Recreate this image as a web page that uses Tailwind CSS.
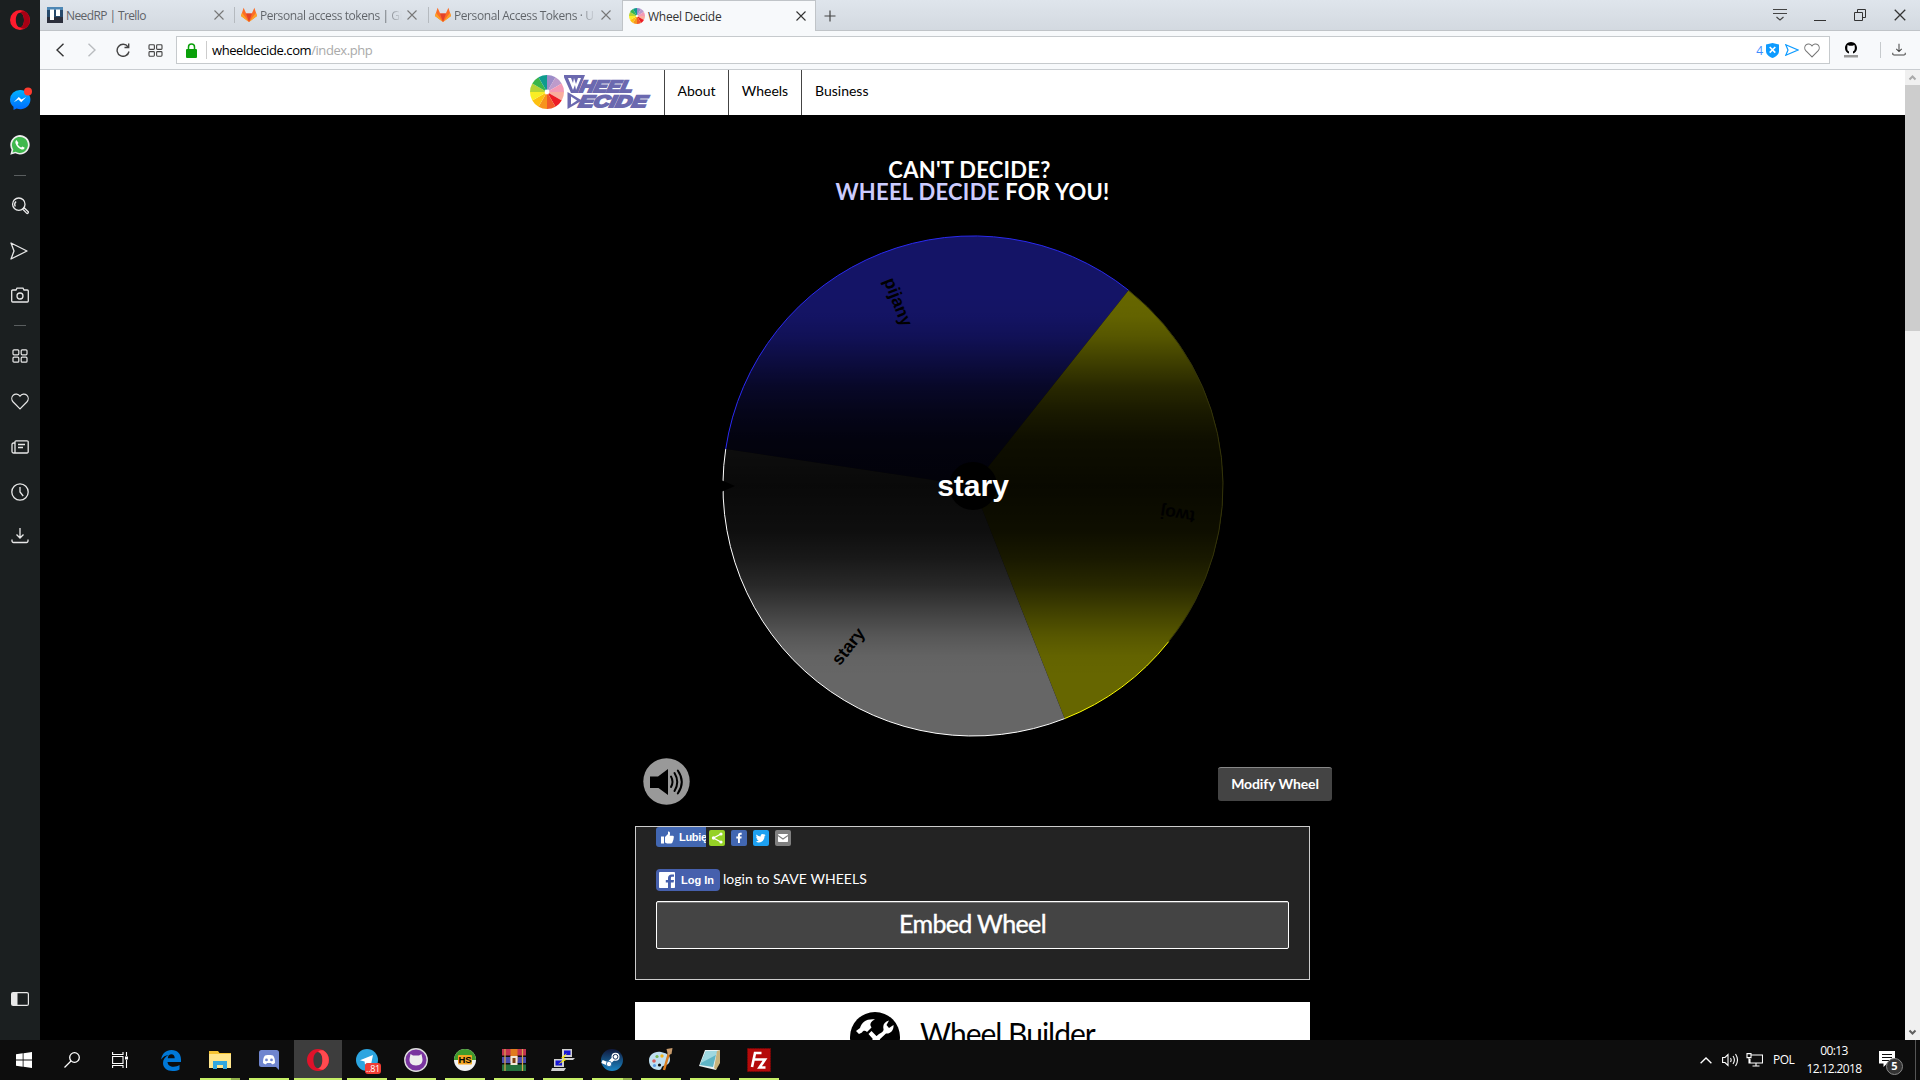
<!DOCTYPE html>
<html lang="pl">
<head>
<meta charset="utf-8">
<title>Wheel Decide</title>
<script src="https://cdn.jsdelivr.net/npm/@tailwindcss/browser@4"></script>
</head>
<body class="flex h-[1080px] w-[1920px] flex-col overflow-hidden bg-black font-['Open_Sans',sans-serif]">
<svg class="hidden">
  <defs>
    <symbol id="opera" viewBox="0 0 24 24"><path fill-rule="evenodd" fill="#ff1b2d" d="M12 0a12 12 0 1 0 0 24 12 12 0 0 0 0-24zm0 3.2c3 0 4.8 4 4.800 8.800s-1.800 8.800-4.800 8.800S7 16.800 7 12s2-8.800 5-8.800z"/><path fill="#a70014" d="M12 3.200C14 1.500 16 1.200 18 1.700A12 12 0 0 1 18 22.300c-2 .5-4 .2-6-1.500 3 0 4.800-4 4.800-8.800S15 3.200 12 3.200z"/></symbol>
    <symbol id="operaTask" viewBox="0 0 24 24"><path fill-rule="evenodd" fill="#e0122a" d="M12 0a12 12 0 1 0 0 24 12 12 0 0 0 0-24zm0 3.200c3 0 4.800 4 4.800 8.800s-1.800 8.800-4.800 8.800S7 16.800 7 12s2-8.800 5-8.800z"/><path fill="#ff4a4f" d="M12 3.200C14 1.500 16 1.200 18 1.700A12 12 0 0 1 18 22.300c-2 .5-4 .2-6-1.500 3 0 4.800-4 4.800-8.800S15 3.200 12 3.200z"/></symbol>
    <symbol id="gitlab" viewBox="0 0 16 16"><path fill="#fc6d26" d="M8 15 0 9 2.600.8 5.200 6.500h5.600L13.400.8 16 9z"/><path fill="#e24329" d="M8 15 5 6.500h6z"/><path fill="#fca326" d="M0 9l1-3.200L8 15zM16 9l-1-3.200L8 15z"/></symbol>
    <symbol id="wheel" viewBox="-50 -50 100 100">
      <g>
        <path fill="#9c8cc8" d="M0 0V-50A50 50 0 0 1 25-43.300z"/><path fill="#bd9bcb" d="M0 0 25-43.300A50 50 0 0 1 43.300-25z"/><path fill="#f49ab4" d="M0 0 43.300-25A50 50 0 0 1 50 0z"/><path fill="#f9ad9e" d="M0 0H50A50 50 0 0 1 43.300 25z"/><path fill="#ed1c24" d="M0 0 43.300 25A50 50 0 0 1 25 43.300z"/><path fill="#f15a29" d="M0 0 25 43.300A50 50 0 0 1 0 50z"/><path fill="#f7941d" d="M0 0V50A50 50 0 0 1-25 43.300z"/><path fill="#fdc010" d="M0 0-25 43.300A50 50 0 0 1-43.300 25z"/><path fill="#f9ed25" d="M0 0-43.300 25A50 50 0 0 1-50 0z"/><path fill="#b5d334" d="M0 0H-50A50 50 0 0 1-43.300-25z"/><path fill="#39b54a" d="M0 0-43.300-25A50 50 0 0 1-25-43.300z"/><path fill="#0f9b8e" d="M0 0-25-43.300A50 50 0 0 1 0-50z"/>
      </g><circle r="7" fill="#fff"/></symbol>
    <symbol id="x" viewBox="0 0 12 12"><path d="M1.500 1.500l9 9m0-9-9 9" stroke="currentColor" stroke-width="1.100" fill="none"/></symbol>
    <symbol id="grid" viewBox="0 0 16 14"><g fill="none" stroke="currentColor" stroke-width="1.200"><rect x="1" y=".8" width="5.800" height="5" rx="1"/><rect x="9.200" y=".8" width="5.800" height="5" rx="1"/><rect x="1" y="8.200" width="5.800" height="5" rx="1"/><rect x="9.200" y="8.200" width="5.800" height="5" rx="1"/></g></symbol>
    <symbol id="heart" viewBox="0 0 18 17"><path d="M9 15.800 2.200 9C.3 7 .4 4 2.200 2.200c2-1.800 5-1.400 6.800 1 1.800-2.400 4.800-2.800 6.800-1C17.600 4 17.700 7 15.800 9z" fill="none" stroke="currentColor" stroke-width="1.200"/></symbol>
    <symbol id="send" viewBox="0 0 18 18"><path d="M1 1l16 8L1 17l3-8z" fill="none" stroke="currentColor" stroke-width="1.300" stroke-linejoin="round"/></symbol>
    <symbol id="dl" viewBox="0 0 18 18"><path d="M9 1v10M5.500 7.500 9 11l3.500-3.500M1 12.500V14a1.500 1.500 0 0 0 1.500 1.500h13A1.500 1.500 0 0 0 17 14v-1.500" fill="none" stroke="currentColor" stroke-width="1.300"/></symbol>
  </defs>
</svg>

<div class="flex h-[1040px]">
  <!-- Opera sidebar -->
  <aside class="flex w-10 flex-col bg-[#1b1f20] text-[#e8e8e8]">
    <div class="flex h-10 items-center justify-center"><svg class="size-5"><use href="#opera"/></svg></div>
    <div class="mt-9 flex h-[46px] items-center justify-center">
      <svg class="h-6 w-6" viewBox="0 0 24 24"><defs><linearGradient id="ms" x1="0" y1="0" x2="0" y2="1"><stop stop-color="#00b2ff"/><stop offset="1" stop-color="#006aff"/></linearGradient></defs><path fill="url(#ms)" d="M12 3a10 9.600 0 0 0-10 9.600c0 3 1.200 5.400 3.500 7.200V23l3.200-1.500a10 9.600 0 1 0 3.300-18.500z"/><path d="M5.800 15.200l5-5.300 2.700 2.600 4.700-2.600-5 5.300-2.700-2.600z" fill="#fff"/><circle cx="20" cy="4.500" r="4" fill="#ff3b2f"/></svg>
    </div>
    <div class="flex h-[46px] items-center justify-center">
      <svg class="size-5" viewBox="0 0 20 20"><path d="M.3 19.700l1.300-5A9.700 9.700 0 1 1 5.300 18.300z" fill="#eee"/><path d="M2.500 17.500l.8-3.100a8 8 0 1 1 2.400 2.300z" fill="#3fb84d"/><path d="M6.500 5c-1 .7-1.400 2-.9 3.400 1 3 3.200 5 6 6 1.600.4 2.700-.2 3.100-1.700l-2.300-1.300-1.200 1.200c-1.600-.6-2.800-1.800-3.600-3.400L8.500 8z" fill="#fff"/></svg>
    </div>
    <div class="flex h-[15px] items-center justify-center"><div class="h-px w-3 bg-[#5a5e5f]"></div></div>
    <div class="flex h-[46px] items-center justify-center"><svg class="size-[18px]" viewBox="0 0 18 18" fill="none" stroke="currentColor" stroke-width="1.300"><circle cx="7.800" cy="7.200" r="6.200"/><path d="M4.300 9.500a4 4 0 0 1 .8-5"/><path d="M11.800 12.300l1.500-1.300 3.700 3.500a1 1 0 0 1-1.500 1.600z"/></svg></div>
    <div class="flex h-11 items-center justify-center pr-0.5"><svg class="size-[18px]"><use href="#send"/></svg></div>
    <div class="flex h-11 items-center justify-center pr-px"><svg class="h-4 w-[18px]" viewBox="0 0 18 16" fill="none" stroke="currentColor" stroke-width="1.300"><path d="M1.700 3H5l1-1.800h6L13 3h3.300a1 1 0 0 1 1 1v10a1 1 0 0 1-1 1H1.700a1 1 0 0 1-1-1V4a1 1 0 0 1 1-1z"/><circle cx="9" cy="9" r="3"/></svg></div>
    <div class="flex h-[17px] items-center justify-center"><div class="h-px w-3 bg-[#5a5e5f]"></div></div>
    <div class="flex h-11 items-center justify-center pr-px"><svg class="h-[14px] w-4"><use href="#grid"/></svg></div>
    <div class="flex h-[46px] items-center justify-center pr-px"><svg class="h-[17px] w-[18px]"><use href="#heart"/></svg></div>
    <div class="flex h-[46px] items-center justify-center pr-px"><svg class="h-[14px] w-[18px]" viewBox="0 0 18 14" fill="none" stroke="currentColor" stroke-width="1.300"><path d="M4 3H2.500A1.500 1.500 0 0 0 1 4.500v7A1.500 1.500 0 0 0 2.500 13H16a1.200 1.200 0 0 0 1.200-1.200V2A1.200 1.200 0 0 0 16 .8H5A1 1 0 0 0 4 1.800V13M7 4.500h7M7 7.500h5"/></svg></div>
    <div class="flex h-[43px] items-center justify-center pr-px"><svg class="size-[18px]" viewBox="0 0 18 18" fill="none" stroke="currentColor" stroke-width="1.300"><circle cx="9" cy="9" r="8.200"/><path d="M9 4v5l3.200 4"/></svg></div>
    <div class="flex h-[46px] items-center justify-center pr-px"><svg class="size-[18px]"><use href="#dl"/></svg></div>
    <div class="mt-auto flex h-[82px] items-center justify-center pr-px"><svg class="h-[14px] w-[18px]" viewBox="0 0 18 14"><rect x=".6" y=".6" width="16.800" height="12.800" rx="1.500" fill="none" stroke="#e8e8e8" stroke-width="1.200"/><path d="M1 1h5.500v12H1z" fill="#e8e8e8"/></svg></div>
  </aside>

  <div class="flex w-[1880px] flex-col">
    <!-- Tab strip -->
    <div class="flex h-[31px] items-stretch border-b border-[#c0c4c8] bg-linear-to-b from-[#dfe5ec] to-[#d3d9e0] text-[12px] text-[#5f6368]">
      <div class="flex h-[30px] w-[194px] items-center pl-[7px]">
        <svg class="size-4" viewBox="0 0 16 16"><rect width="16" height="16" rx="1" fill="#274a6b"/><path d="M0 10h16v6H0z" fill="#2b2f3c"/><path d="M0 0h16v3H0z" fill="#4d87b5"/><path d="M3 2.500h4v10.500H3zM9 2.500h4v6.500H9z" fill="#fff"/></svg>
        <span class="ml-[3px] w-[147px] pt-0.5 whitespace-nowrap tracking-[-0.6px]">NeedRP | Trello</span>
        <svg class="size-3 text-[#777]"><use href="#x"/></svg>
      </div>
      <div class="flex h-[30px] w-[194px] items-center">
        <div class="h-4 w-px bg-[#b5babf]"></div>
        <svg class="ml-1.5 size-4"><use href="#gitlab"/></svg>
        <span class="ml-[3px] w-[142px] overflow-hidden bg-linear-to-r from-[#5f6368] from-88% to-transparent to-100% bg-clip-text pt-0.5 whitespace-nowrap tracking-[-0.42px] text-transparent">Personal access tokens | Gi</span>
        <svg class="ml-1 size-3 text-[#777]"><use href="#x"/></svg>
      </div>
      <div class="flex h-[30px] w-[194px] items-center">
        <div class="h-4 w-px bg-[#b5babf]"></div>
        <svg class="ml-1.5 size-4"><use href="#gitlab"/></svg>
        <span class="ml-[3px] w-[142px] overflow-hidden bg-linear-to-r from-[#5f6368] from-88% to-transparent to-100% bg-clip-text pt-0.5 whitespace-nowrap tracking-[-0.42px] text-transparent">Personal Access Tokens · U</span>
        <svg class="ml-1 size-3 text-[#777]"><use href="#x"/></svg>
      </div>
      <div class="flex h-[31px] w-[194px] items-center border-x border-t border-[#c0c4c8] bg-[#f7f9fb] pl-1.5 text-[#333]">
        <svg class="size-4"><use href="#wheel"/></svg>
        <span class="ml-[3px] w-[147px] pt-px tracking-[-0.25px]">Wheel Decide</span>
        <svg class="size-3 text-[#333]"><use href="#x"/></svg>
      </div>
      <svg class="ml-2 mt-[10px] size-3" viewBox="0 0 12 12"><path d="M6 .5v11M.5 6h11" stroke="#444" stroke-width="1.200"/></svg>
      <svg class="ml-[937px] mt-[8px] h-[14px] w-[14px]" viewBox="0 0 14 14" fill="none" stroke="#444" stroke-width="1.200"><path d="M0 1.500h14M0 5.500h14M3.500 9l3.500 3 3.500-3"/></svg>
      <div class="ml-[27px] mt-5 h-px w-3 bg-[#333]"></div>
      <svg class="ml-7 mt-[9px] size-3" viewBox="0 0 12 12" fill="none" stroke="#333" stroke-width="1"><path d="M.5 3.500h8v8h-8zM3.500 3.500v-3h8v8h-3"/></svg>
      <svg class="ml-[27px] mt-2 size-[14px] text-[#333]"><use href="#x"/></svg>
    </div>
    <!-- Address bar -->
    <div class="flex h-[39px] items-center border-b border-[#c9cdd1] bg-[#f7f9fb] text-[#444]">
      <svg class="ml-[16px] h-[14px] w-2" viewBox="0 0 8 14"><path d="M7.500.8 1 7l6.500 6.200" fill="none" stroke="#333" stroke-width="1.400"/></svg>
      <svg class="ml-6 h-[14px] w-2" viewBox="0 0 8 14"><path d="M.5.800 7 7 .5 13.200" fill="none" stroke="#b9bcbf" stroke-width="1.400"/></svg>
      <svg class="ml-[20px] size-[14px]" viewBox="0 0 14 14" fill="none" stroke="#444" stroke-width="1.400"><path d="M12 3.800A6 6 0 1 0 13 8.500M12.700.5v4H8.500"/></svg>
      <svg class="ml-[18px] h-[13px] w-[15px]"><use href="#grid"/></svg>
      <div class="ml-[13px] flex h-7 w-[1654px] items-center border border-[#c6cacd] bg-white pl-[9px]">
        <svg class="h-[15px] w-[11px]" viewBox="0 0 11 15"><rect y="6" width="11" height="9" rx="1" fill="#0aa00a"/><path d="M2.500 6V4a3 3 0 0 1 6 0v2" fill="none" stroke="#0aa00a" stroke-width="1.500"/></svg>
        <div class="ml-[9px] h-[18px] w-px bg-[#ccc]"></div>
        <span class="ml-[5px] pt-px text-[13px] tracking-[-0.42px] text-black">wheeldecide.com<span class="text-[#aaa]">/index.php</span></span>
        <span class="ml-auto pt-px text-[12px] text-[#3a8cff]">4</span>
        <svg class="ml-[3px] h-[15px] w-[13px]" viewBox="0 0 13 15"><path d="M6.500 0 13 1.500V8c0 3-2.500 5.500-6.500 7C2.500 13.500 0 11 0 8V1.500z" fill="#0d9bff"/><path d="M3.700 4l5.600 5.600m0-5.600L3.700 9.600" stroke="#fff" stroke-width="1.600"/></svg>
        <svg class="ml-[6px] h-3 w-[14px] text-[#0d9bff]" viewBox="0 0 14 12"><path d="M.8.8 13 6 .8 11.200 3 6z" fill="none" stroke="currentColor" stroke-width="1.200"/></svg>
        <svg class="ml-[5px] mr-[9px] h-[15px] w-4 text-[#777]"><use href="#heart"/></svg>
      </div>
      <svg class="ml-[14px] size-4" viewBox="0 0 16 16"><path fill="#000" d="M7 0C3.500 0 1 2.800 1 6c0 2.700 1.600 4.700 4 5.600V9.500c-1.200-.8-2-1.500-1.700-4L3.500 3l2 .7h3l2-.7.300 2.500c.2 2.500-.8 3.200-1.800 4v2.100C11.400 10.700 13 8.700 13 6c0-3.200-2.500-6-6-6z"/><path fill="#999" d="M0 13h14v2.500H0z"/></svg>
      <div class="ml-5 h-4 w-px bg-[#c6cacd]"></div>
      <svg class="ml-[11px] size-[14px]"><use href="#dl"/></svg>
    </div>

    <!-- Web page -->
    <div class="flex h-[970px]">
      <main class="flex w-[1865px] flex-col items-center overflow-hidden bg-black font-['Lato',sans-serif] text-white">
        <header class="flex h-[45px] w-full shrink-0 bg-white text-[14px] text-black">
          <div class="flex w-[624px] items-start pl-[490px] pt-[5px]">
            <svg class="size-[34px] shrink-0"><use href="#wheel"/></svg>
            <svg class="h-[34px] w-[88px] shrink-0" viewBox="0 0 88 34"><g fill="#6b69af"><path fill-rule="evenodd" d="M-1 0h22L14 18H7zM4 3l5 12 2-5 1 5 5-12-3 0-2 6-2-6-1 5-2-5z"/><path fill-rule="evenodd" d="M3.500 17 18 25.500 3.500 34zM7 21.500v8L13 25.500z"/></g><g fill="#6b69af" stroke="#6b69af" stroke-width="1.800" font-family="Liberation Sans" font-weight="bold" font-style="italic" font-size="16.500"><text transform="translate(15 16.800) skewX(-12)" textLength="53" lengthAdjust="spacingAndGlyphs">HEEL</text><text transform="translate(14 32.200) skewX(-12)" textLength="68" lengthAdjust="spacingAndGlyphs">ECIDE</text></g></svg>
          </div>
          <a class="flex h-full w-16 items-center justify-center border-l border-[#444] pb-1">About</a>
          <a class="flex h-full w-[73px] items-center justify-center border-l border-[#444] pb-1">Wheels</a>
          <a class="flex h-full items-center border-l border-[#444] pb-1 pl-[13px]">Business</a>
        </header>
        <h1 class="mt-[43px] pt-px text-center text-[22px] leading-[22px] font-bold tracking-[0.26px]"><span class="relative -left-[3px]">CAN'T DECIDE?</span><br><span class="text-[#ccccff]">WHEEL DECIDE</span> FOR YOU!</h1>
        <svg class="mt-[31px] h-[504px] w-[504px] shrink-0" viewBox="-252 -252 504 504">
          <defs>
            <linearGradient id="shade" gradientUnits="userSpaceOnUse" x1="0" y1="-250" x2="0" y2="250">
              <stop offset=".12" stop-opacity="0"/><stop offset=".16" stop-opacity=".03"/><stop offset=".2" stop-opacity=".15"/><stop offset=".256" stop-opacity=".4"/><stop offset=".302" stop-opacity=".61"/><stop offset=".356" stop-opacity=".76"/><stop offset=".41" stop-opacity=".86"/><stop offset=".5" stop-opacity=".91"/>
              <stop offset=".59" stop-opacity=".86"/><stop offset=".644" stop-opacity=".76"/><stop offset=".698" stop-opacity=".61"/><stop offset=".744" stop-opacity=".4"/><stop offset=".8" stop-opacity=".15"/><stop offset=".84" stop-opacity=".03"/><stop offset=".88" stop-opacity="0"/>
            </linearGradient>
          </defs>
          <path fill="#141466" d="M0 0-247.300-36.900A250 250 0 0 1 155.600-195.700z"/>
          <path fill="#666600" d="M0 0 155.600-195.700A250 250 0 0 1 91.600 232.600z"/>
          <path fill="#666666" d="M0 0 91.600 232.600A250 250 0 0 1-247.300-36.900z"/>
          <circle r="250" fill="url(#shade)"/>
          <g fill="none" stroke-width="1"><path stroke="#2a2af0" d="M-247.300-36.900A250 250 0 0 1 155.600-195.700"/><path stroke="#33330a" d="M155.600-195.700A250 250 0 0 1 195.700 155.600"/><path stroke="#ffff00" d="M195.700 155.600A250 250 0 0 1 91.600 232.600"/><path stroke="#fff" d="M91.600 232.600A250 250 0 0 1-247.300-36.900"/></g>
          <path d="M-252-6-238 0-252 6z"/><circle r="24"/>
          <g font-family="Liberation Sans, sans-serif" font-weight="bold" font-size="17.500">
            <text transform="rotate(68.500)" x="-224" y="8">pijany</text>
            <text transform="rotate(-51.500)" x="-224" y="8">stary</text>
            <text transform="rotate(188.500)" x="-224" y="8">twoj</text>
            <text y="9.500" text-anchor="middle" font-size="30" fill="#fff">stary</text>
          </g>
        </svg>
        <div class="ml-[31px] mt-5 flex h-[68px] w-[690px] shrink-0 items-start justify-between pr-px">
          <svg class="size-[47px] shrink-0" viewBox="0 0 47 47"><circle cx="23.500" cy="23.500" r="23.200" fill="#999"/><path d="M7 18.500h8L25 11v26l-9.500-7H7z"/><g fill="none" stroke="#000" stroke-width="2" stroke-linecap="round"><path d="M28 18.500q3 5.300 0 10.500M31.500 15q5.500 9 0 18M34.800 12.500q8 11.500 0 23"/></g></svg>
          <button class="mt-[9px] h-[34px] w-[114px] rounded-[3px] border-t border-[#888] bg-[#444] pb-[3px] text-[14px] font-bold tracking-[-0.1px]">Modify Wheel</button>
        </div>
        <section class="h-[154px] w-[675px] shrink-0 border border-[#ccc] bg-[#232323] px-5">
          <div class="flex h-5 gap-1.5">
            <div class="-mr-[3px] flex h-5 w-[50px] items-center overflow-hidden rounded-l-[3px] bg-[#4267b2] pl-[5px] font-['Liberation_Sans',sans-serif] text-[11px] font-bold">
              <svg class="size-[13px] shrink-0" viewBox="0 0 13 13" fill="#fff"><path d="M0 5.500h3V12.500H0zM4 6l3-3V.5C9 0 9.500 2 8.700 4.700H12c1 .3 1.200 1.500.5 2.200.3.700.2 1.500-.4 2 .2.800 0 1.500-.6 1.900 0 1.100-.5 1.700-1.500 1.700H6L4 11.500z"/></svg>
              <span class="ml-[5px] tracking-[-0.3px]">Lubię</span>
            </div>
            <svg class="mt-[3px] size-4" viewBox="0 0 16 16"><rect width="16" height="16" rx="2" fill="#95d126"/><path d="M12 4 4.500 8l7.500 4" fill="none" stroke="#fff" stroke-width="1.300"/><circle cx="12" cy="4" r="1.600" fill="#fff"/><circle cx="4.500" cy="8" r="1.700" fill="#fff"/><circle cx="12" cy="12" r="1.600" fill="#fff"/></svg>
            <svg class="mt-[3px] size-4" viewBox="0 0 16 16"><rect width="16" height="16" rx="2" fill="#4267b2"/><path d="M7 13V8.500H5.300v-2H7V5c0-1.500 1-2.300 2.300-2.300h1.400v2H9.600c-.5 0-.7.300-.7.700v1.100h1.800l-.3 2H8.900V13z" fill="#fff"/></svg>
            <svg class="mt-[3px] size-4" viewBox="0 0 16 16"><rect width="16" height="16" rx="2" fill="#1da1f2"/><path d="M3 11.200c1.200 0 2-.3 2.800-.8-.9-.1-1.600-.6-1.900-1.400h.8c-.9-.3-1.500-1-1.500-2l.8.200c-.8-.6-1-1.700-.5-2.600 1.100 1.200 2.500 1.900 4.200 2-.3-1.600.6-2.600 1.900-2.600.6 0 1.100.2 1.500.6l1.200-.4-.8 1.100 1.200-.2-1.200 1.200c.1 3.400-2.400 6.200-5.700 6.200-1 0-2-.4-2.800-1.300z" fill="#fff"/></svg>
            <svg class="mt-[3px] size-4" viewBox="0 0 16 16"><rect width="16" height="16" rx="2" fill="#808080"/><rect x="3" y="4" width="10" height="8" rx=".8" fill="#fff"/><path d="M3 5.500 8 9l5-3.500" fill="none" stroke="#808080" stroke-width="1.100"/></svg>
          </div>
          <div class="mt-[22px] flex h-[22px] items-center text-[14px]">
            <div class="flex h-[22px] w-16 items-center rounded-sm bg-[#4660ad] pl-[3px] font-['Liberation_Sans',sans-serif] text-[11px] font-bold">
              <svg class="size-4" viewBox="0 0 16 16"><rect width="16" height="16" rx=".8" fill="#fff"/><path d="M9 16v-5.500H6.800V8H9V6c0-2.300 1.500-3.600 3.500-3.600H15v2.400h-1.600c-1 0-1.500.4-1.500 1.400V8H15l-.4 2.500h-2.700V16z" fill="#4660ad"/></svg>
              <span class="ml-1.5">Log In</span>
            </div>
            <span class="ml-[3px] -mt-1 tracking-[0.04px]">login to SAVE WHEELS</span>
          </div>
          <button class="mt-2.5 h-12 w-[633px] rounded-[2px] border border-white bg-[#444] pb-0.5 text-[25px] tracking-[-0.65px] shadow-[inset_0_1px_0_#777] [-webkit-text-stroke:0.4px_white]">Embed Wheel</button>
        </section>
        <section class="mt-[22px] flex h-[80px] w-[675px] shrink-0 bg-white pl-[215px] pt-2.5 text-[30px] text-black">
          <svg class="size-[50px]" viewBox="0 0 50 50"><circle cx="25" cy="25" r="25"/><path fill="#fff" d="M6 19l4-3c2-6 7-9.500 15-8.500-3 1-5 3.500-4.500 6l1 2-4.500 4.500c-2-2-4-1.500-5 .5L9 22z"/><path fill="#fff" d="M18.500 22l3-3L40 38l-4 4zM29 22c3-1 5-3 4.500-5-1-4 1-7.500 5.500-8.500l-2.500 4.500 2.500 3 4.500-3c.5 5-3 9-7.500 8.500L14 42l-4-4z"/></svg>
          <span class="ml-[20px] mt-[3px] leading-[36px] tracking-[-1px]">Wheel Builder</span>
        </section>
      </main>
      <div class="flex w-[15px] flex-col justify-between bg-[#f0f0f0]">
        <div>
          <svg class="block size-[15px]" viewBox="0 0 15 15"><path d="M4.500 9.500l3-3 3 3" fill="none" stroke="#aaa" stroke-width="2"/></svg>
          <div class="h-[246px] bg-[#cdcdcd]"></div>
        </div>
        <svg class="block size-[15px]" viewBox="0 0 15 15"><path d="M4.500 5.500l3 3 3-3" fill="none" stroke="#606060" stroke-width="2"/></svg>
      </div>
    </div>
  </div>
</div>

<!-- Windows taskbar -->
<footer class="flex h-10 items-stretch bg-[#0d0d0d] text-[12px] text-white">
  <div class="flex w-12 items-center justify-center"><svg class="size-4" viewBox="0 0 16 16" fill="#fff"><path d="M0 2.300 6.700 1.300v6.200H0zM7.500 1.200 16 0v7.500H7.500zM0 8.400h6.700v6.300L0 13.700zM7.500 8.400H16V16l-8.500-1.200z"/></svg></div>
  <div class="flex w-12 items-center justify-center"><svg class="size-4" viewBox="0 0 16 16" fill="none" stroke="#fff" stroke-width="1.300"><circle cx="10.500" cy="5.500" r="4.800"/><path d="M7 9 .5 15.500"/></svg></div>
  <div class="flex w-12 items-center justify-center"><svg class="h-4 w-4" viewBox="0 0 16 16" fill="none" stroke="#fff" stroke-width="1.100"><path d="M.6 4.500h10.400v7H.6zM.6 0v2.500h10.400V0M.6 16v-2.500h10.400V16M14.500 0v4M14.500 8v8"/><path d="M13 4.500h3v3h-3z" fill="#fff" stroke="none"/></svg></div>
  <div class="ml-[3px] flex gap-px">
    <div class="flex w-12 items-center justify-center"><svg class="h-[21px] w-5" viewBox="0 0 20 21"><path fill="#0078d7" d="M.2 9.500C1 3.500 5 0 10.500 0 16.500 0 20 4 20 9.500V12H6.500c.2 3.200 2.700 4.800 6 4.800 2.400 0 4.300-.6 6-1.700v4.300c-1.800 1-4 1.600-7 1.600C5.800 21 2 17.500 2 13c0-3.500 2-6.300 5.500-7.800C4.500 5.300 2 6.600.2 9.500zM6.800 8.300h6.900c0-2.600-1.300-4-3.300-4s-3.400 1.500-3.600 4z"/></svg></div>
    <div class="flex w-12 flex-col items-center"><svg class="mt-[11px] h-[18px] w-[22px]" viewBox="0 0 22 18"><path fill="#f5c333" d="M0 0h9l1.500 2H22v3H0z"/><path fill="#ffe58c" d="M0 3h22v14H0z"/><path fill="#32a7e0" d="M4 10h14v8h-4v-4H8v4H4z"/></svg><div class="mt-[9px] flex h-0.5 w-10 bg-[#c6ef66]"><div class="ml-auto w-[9px] bg-[#91b04a]"></div></div></div>
    <div class="flex w-12 flex-col items-center"><svg class="mt-[10px] h-5 w-5" viewBox="0 0 20 20"><path fill="#6f85cf" d="M2.500 0h15A2.500 2.500 0 0 1 20 2.500V20l-3-3H2.500A2.500 2.500 0 0 1 0 14.500v-12A2.500 2.500 0 0 1 2.500 0z"/><path fill="#fff" fill-rule="evenodd" d="M4 13c0-4 .7-6 2-7.500L8.500 5h3l2.500.5c1.300 1.500 2 3.500 2 7.500-1 1-2 1.300-3 1.300l-1-1.300H8l-1 1.300c-1 0-2-.3-3-1.300zM7.500 8.500a1.400 1.400 0 1 0 0 2.800 1.400 1.400 0 0 0 0-2.800zm5 0a1.400 1.400 0 1 0 0 2.800 1.400 1.400 0 0 0 0-2.800z"/></svg><div class="mt-2 h-0.5 w-10 bg-[#c6ef66]"></div></div>
    <div class="flex w-12 flex-col items-center bg-[#3d3d3d]"><svg class="mt-[9px] h-[22px] w-[22px]"><use href="#operaTask"/></svg><div class="mt-[7px] h-0.5 w-12 bg-[#c6ef66]"></div></div>
    <div class="flex w-12 flex-col items-center"><div class="relative mt-[9px] size-[22px]"><svg class="size-[22px]" viewBox="0 0 22 22"><circle cx="11" cy="11" r="11" fill="#2ca5e0"/><path fill="#fff" d="M4 11.300 17 6l-2.200 10.500-3.800-2.800-2 2-.4-3.300z"/></svg><span class="absolute top-[14px] left-[9px] flex h-[11px] w-4 items-center justify-center rounded-[3px] bg-[#f23c34] text-[9px] leading-none tracking-[-0.3px]">..81</span></div><div class="mt-[7px] h-0.5 w-10 bg-[#c6ef66]"></div></div>
    <div class="flex w-12 flex-col items-center"><svg class="mt-2 size-6" viewBox="0 0 24 24"><circle cx="12" cy="12" r="11.200" fill="#7a35a0" stroke="#ddd" stroke-width="1.400"/><path fill="#eee" d="M6.500 6 9 7.500h6L17.500 6l.8 4c1 4.500-1.500 7.500-6.300 7.500S4.700 14.500 5.700 10z"/></svg><div class="mt-1.5 h-0.5 w-10 bg-[#c6ef66]"></div></div>
    <div class="flex w-12 flex-col items-center"><svg class="mt-2 size-6" viewBox="0 0 24 24"><circle cx="12" cy="12" r="11" fill="#f2f2f2"/><path fill="#3f9b2c" d="M1 12a11 11 0 0 1 22 0z"/><rect x="5" y="7" width="14" height="9.500" rx="1" fill="#f5a623"/><text x="12" y="15.300" text-anchor="middle" font-size="9.500" font-weight="bold" font-family="Liberation Sans">HS</text></svg><div class="mt-1.5 h-0.5 w-10 bg-[#c6ef66]"></div></div>
    <div class="flex w-12 flex-col items-center"><svg class="mt-2 size-6" viewBox="0 0 24 24"><path fill="#c3324f" d="M0 1h24v6.500H0z"/><path fill="#4a4cae" d="M0 9h24v6H0z"/><path fill="#24713c" d="M0 16.500h24V23H0z"/><path stroke="#d7a84c" stroke-width="1.200" d="M3 1v22M20.500 1v22"/><path fill="#e07b1d" d="M8.500 1h7v12h-7z"/><path fill="#f2e7d5" d="M8.500 8h7v9h-7z"/><path fill="#7a3b10" d="M10.500 10h3v5h-3z"/></svg><div class="mt-1.5 h-0.5 w-10 bg-[#c6ef66]"></div></div>
    <div class="flex w-12 flex-col items-center"><svg class="mt-2 size-6" viewBox="0 0 24 24"><path fill="#cfcfcf" d="M11 1h10v8H11zM3 11h10v8H3zM1 20h14l-2 3H0zM11 10h13l-2 2H10z"/><path fill="#1717d6" d="M13 2.500h6.500V7H13zM4.500 12.500H11v5H4.500z"/><path fill="#f6e70b" d="M16 5 10 10h4l-7 6.500 9-5h-4z"/></svg><div class="mt-1.5 h-0.5 w-10 bg-[#c6ef66]"></div></div>
    <div class="flex w-12 flex-col items-center"><svg class="mt-[9px] size-[22px]" viewBox="0 0 22 22"><defs><linearGradient id="st" x1="0" y1="0" x2="0" y2="1"><stop stop-color="#10183c"/><stop offset="1" stop-color="#1a86c4"/></linearGradient></defs><circle cx="11" cy="11" r="11" fill="url(#st)"/><path stroke="#fff" stroke-width="3.500" fill="none" d="M1 12.500l6 2.500 7-7"/><circle cx="14.500" cy="7.800" r="4" fill="#fff"/><circle cx="14.500" cy="7.800" r="2.400" fill="#fff" stroke="#17305c"/><circle cx="8" cy="15" r="2.700" fill="#fff" stroke="#17609c" stroke-width=".8"/></svg><div class="mt-[7px] flex h-0.5 w-10 bg-[#c6ef66]"><div class="ml-auto w-[9px] bg-[#91b04a]"></div></div></div>
    <div class="flex w-12 flex-col items-center"><svg class="mt-2 size-6" viewBox="0 0 24 24"><path fill="#bfe0f2" d="M12 4C5 3 0 7 0 12.500s4 9.500 10 9.500c3 0 2-3 4-4 5-1 7-3 7-7 0-4-4-6-9-7z"/><circle cx="5" cy="13" r="1.800" fill="#d8605f"/><circle cx="8" cy="8.500" r="1.600" fill="#77b957"/><circle cx="13" cy="8" r="1.700" fill="#f2b41b"/><circle cx="5.500" cy="17.500" r="1.600" fill="#5b9de4"/><circle cx="10.500" cy="17" r="1.600" fill="#0d0d0d"/><path stroke="#d87b1d" stroke-width="2.500" d="M20 5l-5 17"/><path fill="#c79a6b" d="M17.500 1l6-1-1 6-3.500 1z"/></svg><div class="mt-1.5 h-0.5 w-10 bg-[#c6ef66]"></div></div>
    <div class="flex w-12 flex-col items-center"><svg class="mt-2 size-6" viewBox="0 0 24 24"><path fill="#e8f1f2" d="M7 2h15l-4 20L1 18z"/><path fill="#5fb5c6" d="M8 3h11l-4 16L2 17z"/><path fill="#9fd8e0" d="M8 3h11l-1 4L3 15z"/><path fill="#c8b37c" d="M19 3l3-1v13l-4 7-2-2z"/></svg><div class="mt-1.5 h-0.5 w-10 bg-[#c6ef66]"></div></div>
    <div class="flex w-12 flex-col items-center"><svg class="mt-2 size-6" viewBox="0 0 24 24"><rect x=".5" y=".5" width="23" height="23" fill="#b50a0a" stroke="#7d0606" stroke-dasharray="1.500 1"/><path fill="none" stroke="#fff" stroke-width="2.600" d="M14.500 5H8L5 19M6.500 11.500h5M11.500 11.500H18l-5.500 8h6"/></svg><div class="mt-1.5 h-0.5 w-10 bg-[#c6ef66]"></div></div>
  </div>
  <div class="ml-auto flex items-center">
    <svg class="h-[7px] w-3" viewBox="0 0 12 7"><path d="M.6 6.300 6 1l5.400 5.300" fill="none" stroke="#fff" stroke-width="1.300"/></svg>
    <svg class="ml-[10px] h-[14px] w-[17px]" viewBox="0 0 17 14" fill="none" stroke="#fff" stroke-width="1.100"><path d="M.6 4.500H3l3-3v11l-3-3H.6zM8.500 5q1.300 2 0 4M11 3q2.800 4 0 8M13.500 1q4 6 0 12"/></svg>
    <svg class="ml-[7px] h-[14px] w-[17px]" viewBox="0 0 17 14" fill="none" stroke="#fff" stroke-width="1.100"><path d="M5.500 2h11v8H4V6M10 10v3M6.500 13h7M1 .6h4v4H1zM3 4.600V10H4"/></svg>
    <span class="ml-[10px] w-[23px] tracking-[-0.5px]">POL</span>
    <div class="ml-[10px] w-[56px] text-center leading-[18px] tracking-[-0.6px]">00:13<br>12.12.2018</div>
    <div class="relative ml-[17px] h-6 w-6"><svg class="absolute top-[3px] left-0 h-4 w-4" viewBox="0 0 16 16"><path fill="#fff" d="M0 0h16v12.500H8L4.500 16v-3.500H0z"/><path stroke="#0d0d0d" d="M3 3.500h10M3 6.500h10M3 9.500h7"/></svg><span class="absolute top-[10px] left-[7px] flex size-[17px] items-center justify-center rounded-full border border-[#888] bg-[#333] text-[11px] font-bold">5</span></div>
    <div class="ml-[12px] h-10 w-px bg-[#555]"></div>
    <div class="w-1"></div>
  </div>
</footer>
</body>
</html>
